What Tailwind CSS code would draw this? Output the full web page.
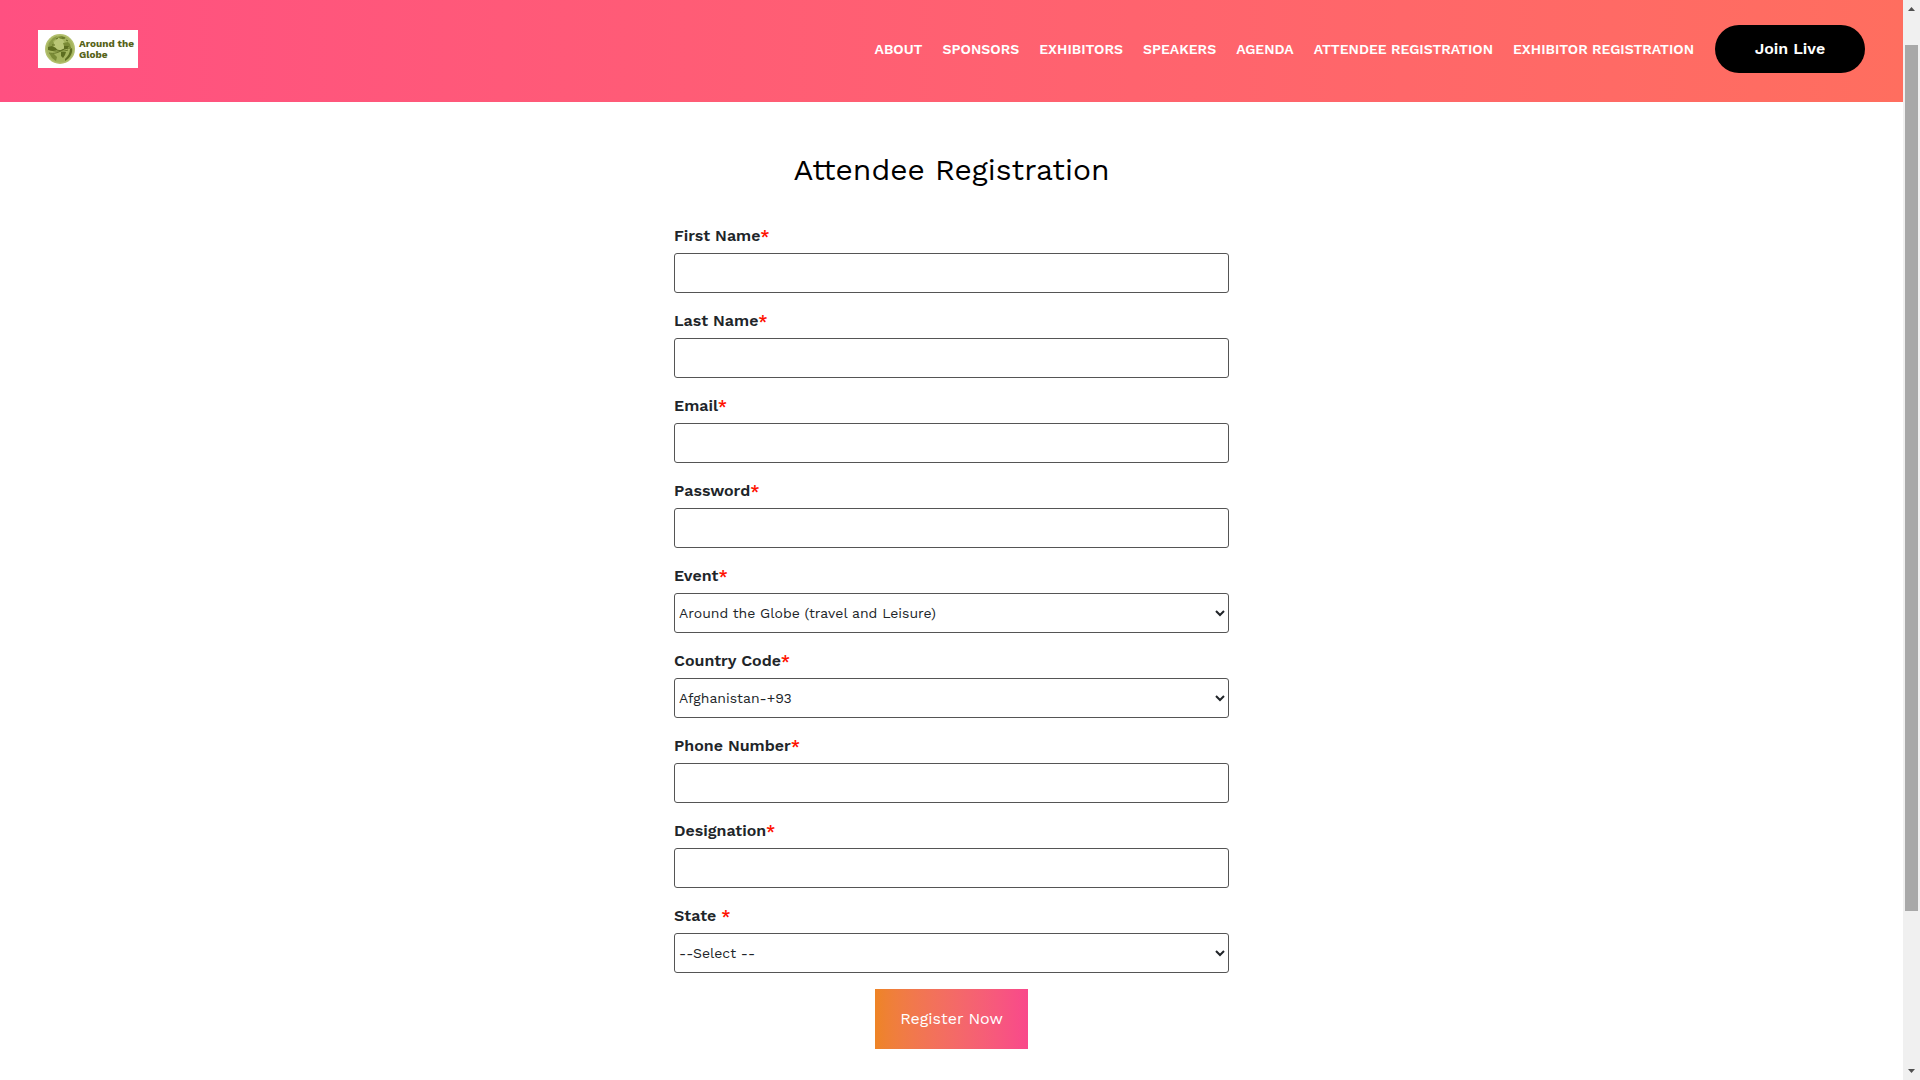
<!DOCTYPE html>
<html lang="en">
<head>
  <meta charset="UTF-8" />
  <meta name="viewport" content="width=device-width, initial-scale=1.0" />
  <title>Attendee Registration</title>
  <script src="https://cdn.jsdelivr.net/npm/@tailwindcss/browser@4"></script>
</head>

<body class="flex min-h-screen bg-white font-['Work_Sans',Inter,sans-serif] text-[#212529]">
  <div class="flex-1 min-w-0">

    <!-- Header -->
    <header class="flex items-center justify-between px-[38px] pt-[25px] pb-[29px] bg-linear-to-r from-[#ff5081] to-[#ff6e5f]">
      <a href="#" class="flex items-center gap-1 w-[100px] h-[38px] pl-[7px] bg-white text-[#566217]">
        <svg class="size-[30px] shrink-0" viewBox="0 0 30 30">
          <circle cx="15" cy="15" r="15" fill="#b3c06e" />
          <circle cx="15" cy="15" r="13.6" fill="#a5b45e" />
          <path d="M9 8l5-5 4 3 3 5-2 5-5 1-5-3z" fill="#b9c676" />
          <path d="M4 9l4-5 4-2-1 3-3 2 1 3-3 3-3 1z" fill="#8b9c48" />
          <path d="M12 3l5-1 4 2-3 1-2 0zM18 9l5-1 2 2 1 4-3-1-2 1-2-2z" fill="#7a8b36" />
          <path d="M3 13l4-1 4 2 1 2-4 1-5-1zM16 18l5 0-1 3-2 3-2-2zM19 12l5 0-2 3-3 0z" fill="#5d6d20" />
          <path d="M3 15c5 2 9 3 14 1 3-1 5-2 9-2M4 19c5 1 9 0 15-4M9 14c4 3 9 4 14 2" fill="none" stroke="#5d6d20" stroke-width="0.9" />
          <path d="M4 19l5 1 3 3-1 4-4-3z" fill="#7a8b36" />
          <path d="M27 14c1 5-2 10-7 13l0-2c3-3 5-6 5-10z" fill="#5d6d20" />
          <path d="M11 5l2-1M17 4l3 0M21 6l2 1M7 11l3 0" stroke="#5d6d20" stroke-width="1" />
        </svg>
        <span class="font-bold text-[10px] leading-[11px] whitespace-nowrap">Around the<br />Globe</span>
      </a>
      <div class="flex items-center gap-[21px]">
        <nav class="flex gap-5 text-sm font-semibold text-white whitespace-nowrap">
          <a href="#">ABOUT</a>
          <a href="#">SPONSORS</a>
          <a href="#">EXHIBITORS</a>
          <a href="#">SPEAKERS</a>
          <a href="#">AGENDA</a>
          <a href="#">ATTENDEE REGISTRATION</a>
          <a href="#">EXHIBITOR REGISTRATION</a>
        </nav>
        <button type="button" class="w-[150px] h-12 rounded-full bg-black text-white text-base font-semibold">Join Live</button>
      </div>
    </header>

    <!-- Registration form -->
    <main class="max-w-[555px] mx-auto pt-12 pb-8">
      <h1 class="mb-[34px] text-center text-[30px] leading-10 text-black">Attendee Registration</h1>

      <form class="flex flex-col gap-4">
        <div class="flex flex-col gap-[5px]">
          <label for="first" class="font-semibold">First Name<span class="text-[#ff1100]">*</span></label>
          <input id="first" type="text" class="h-10 px-2 border border-[#555] rounded-[3px]" />
        </div>
        <div class="flex flex-col gap-[5px]">
          <label for="last" class="font-semibold">Last Name<span class="text-[#ff1100]">*</span></label>
          <input id="last" type="text" class="h-10 px-2 border border-[#555] rounded-[3px]" />
        </div>
        <div class="flex flex-col gap-[5px]">
          <label for="email" class="font-semibold">Email<span class="text-[#ff1100]">*</span></label>
          <input id="email" type="email" class="h-10 px-2 border border-[#555] rounded-[3px]" />
        </div>
        <div class="flex flex-col gap-[5px]">
          <label for="password" class="font-semibold">Password<span class="text-[#ff1100]">*</span></label>
          <input id="password" type="password" class="h-10 px-2 border border-[#555] rounded-[3px]" />
        </div>
        <div class="flex flex-col gap-[5px]">
          <label for="event" class="font-semibold">Event<span class="text-[#ff1100]">*</span></label>
          <select id="event" class="h-10 border border-[#555] rounded-[3px] text-sm">
            <option>Around the Globe (travel and Leisure)</option>
          </select>
        </div>
        <div class="flex flex-col gap-[5px]">
          <label for="code" class="font-semibold">Country Code<span class="text-[#ff1100]">*</span></label>
          <select id="code" class="h-10 border border-[#555] rounded-[3px] text-sm">
            <option>Afghanistan-+93</option>
          </select>
        </div>
        <div class="flex flex-col gap-[5px]">
          <label for="phone" class="font-semibold">Phone Number<span class="text-[#ff1100]">*</span></label>
          <input id="phone" type="tel" class="h-10 px-2 border border-[#555] rounded-[3px]" />
        </div>
        <div class="flex flex-col gap-[5px]">
          <label for="designation" class="font-semibold">Designation<span class="text-[#ff1100]">*</span></label>
          <input id="designation" type="text" class="h-10 px-2 border border-[#555] rounded-[3px]" />
        </div>
        <div class="flex flex-col gap-[5px]">
          <label for="state" class="font-semibold">State <span class="text-[#ff1100]">*</span></label>
          <select id="state" class="h-10 border border-[#555] rounded-[3px] text-sm">
            <option>--Select --</option>
          </select>
        </div>
        <button type="submit" class="self-center w-[153px] h-[60px] bg-linear-to-r from-[#ee8425] to-[#f9488b] text-white">Register Now</button>
      </form>
    </main>
  </div>

  <!-- Scrollbar -->
  <div class="sticky top-0 flex flex-col items-center w-[17px] h-screen bg-[#f0f0f0]">
    <svg class="h-[45px] w-[17px]" viewBox="0 0 17 45"><path d="M5 11h7l-3.500-4z" fill="#505050" /></svg>
    <div class="w-[13px] h-[866px] bg-[#a8a8a8]"></div>
    <svg class="mt-auto size-[17px]" viewBox="0 0 17 17"><path d="M5 6h7l-3.500 4z" fill="#505050" /></svg>
  </div>
</body>
</html>
